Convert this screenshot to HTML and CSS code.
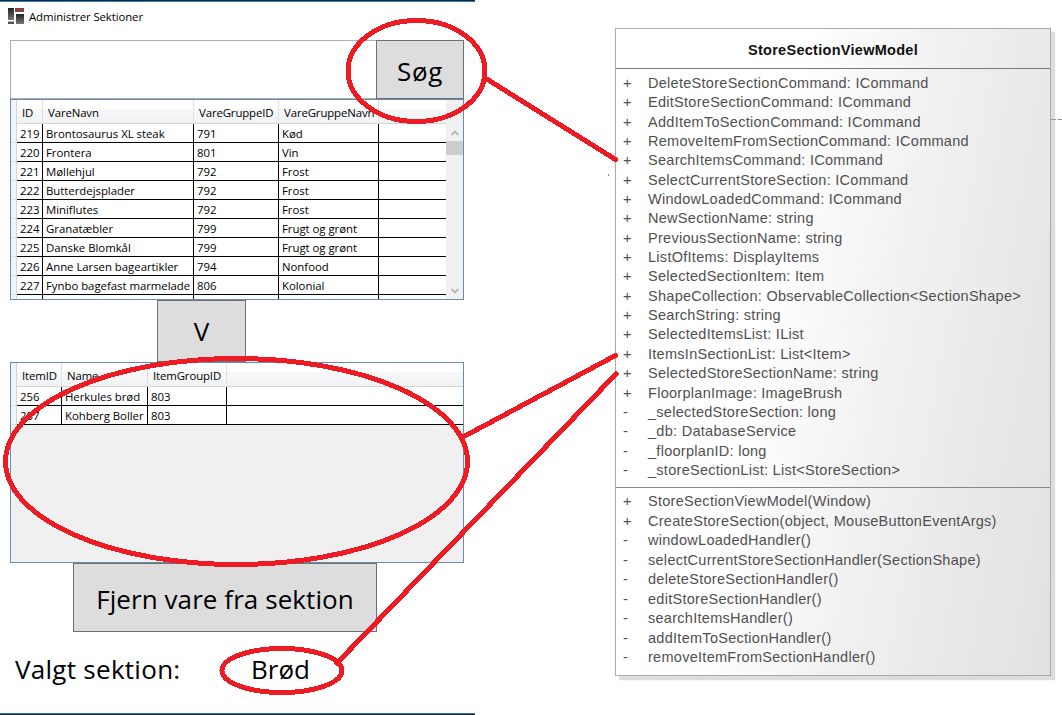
FILE: index.html
```
<!DOCTYPE html>
<html lang="da">
<head>
<meta charset="utf-8">
<title>Administrer Sektioner</title>
<link rel="stylesheet" href="styles.css">
</head>
<body>
<main class="page">
  <section class="window">
    <header class="titlebar">
      <svg class="logo" width="16" height="16" viewBox="0 0 16 16">
        <defs><linearGradient id="g" x1="0" y1="0" x2="0" y2="1"><stop offset="0" stop-color="#222"/><stop offset="1" stop-color="#777"/></linearGradient></defs>
        <rect width="6" height="12" fill="url(#g)"/><rect y="13.500" width="6" height="2.500" fill="#555"/>
        <rect x="7" width="9" height="4" fill="#555"/><rect x="9" y="1" width="5" height="2" fill="#f02018"/>
        <rect x="8" y="6" width="8" height="10" fill="url(#g)"/>
      </svg>
      <span>Administrer Sektioner</span>
    </header>
    <div class="search"><div class="input"></div><button class="btn find">Søg</button></div>
    <div class="grid">
      <div class="main">
        <div class="row head items"><i></i><b>ID</b><b>VareNavn</b><b>VareGruppeID</b><b>VareGruppeNavn</b><b></b></div>
        <div class="row items"><i></i><span>219</span><span>Brontosaurus XL steak</span><span>791</span><span>Kød</span><span></span></div>
        <div class="row items"><i></i><span>220</span><span>Frontera</span><span>801</span><span>Vin</span><span></span></div>
        <div class="row items"><i></i><span>221</span><span>Møllehjul</span><span>792</span><span>Frost</span><span></span></div>
        <div class="row items"><i></i><span>222</span><span>Butterdejsplader</span><span>792</span><span>Frost</span><span></span></div>
        <div class="row items"><i></i><span>223</span><span>Miniflutes</span><span>792</span><span>Frost</span><span></span></div>
        <div class="row items"><i></i><span>224</span><span>Granatæbler</span><span>799</span><span>Frugt og grønt</span><span></span></div>
        <div class="row items"><i></i><span>225</span><span>Danske Blomkål</span><span>799</span><span>Frugt og grønt</span><span></span></div>
        <div class="row items"><i></i><span>226</span><span>Anne Larsen bageartikler</span><span>794</span><span>Nonfood</span><span></span></div>
        <div class="row items"><i></i><span>227</span><span>Fynbo bagefast marmelade</span><span>806</span><span>Kolonial</span><span></span></div>
        <div class="row items"><i></i><span></span><span></span><span></span><span></span><span></span></div>
      </div>
      <div class="scroll">
        <svg width="8" height="6" viewBox="0 0 8 6"><path d="M.5 5 4 1.500 7.500 5" fill="none" stroke="#a3a3a3" stroke-width="1.400"/></svg>
        <div class="thumb"></div>
        <svg class="down" width="8" height="6" viewBox="0 0 8 6"><path d="M.5 1 4 4.500 7.500 1" fill="none" stroke="#a3a3a3" stroke-width="1.400"/></svg>
      </div>
    </div>
    <button class="btn move">V</button>
    <div class="grid">
      <div class="main">
        <div class="row head section"><i></i><b>ItemID</b><b>Name</b><b>ItemGroupID</b><b></b></div>
        <div class="row section"><i></i><span>256</span><span>Herkules brød</span><span>803</span><span></span></div>
        <div class="row section"><i></i><span>257</span><span>Kohberg Boller</span><span>803</span><span></span></div>
      </div>
    </div>
    <button class="btn remove">Fjern vare fra sektion</button>
    <div class="status"><span class="label">Valgt sektion:</span><span class="value">Brød</span></div>
    <div class="edge"></div>
  </section>
  <section class="uml">
    <h1>StoreSectionViewModel</h1>
    <ul class="attrs">
      <li><em>+</em><span>DeleteStoreSectionCommand: ICommand</span></li>
      <li><em>+</em><span>EditStoreSectionCommand: ICommand</span></li>
      <li><em>+</em><span>AddItemToSectionCommand: ICommand</span></li>
      <li><em>+</em><span>RemoveItemFromSectionCommand: ICommand</span></li>
      <li><em>+</em><span>SearchItemsCommand: ICommand</span></li>
      <li><em>+</em><span>SelectCurrentStoreSection: ICommand</span></li>
      <li><em>+</em><span>WindowLoadedCommand: ICommand</span></li>
      <li><em>+</em><span>NewSectionName: string</span></li>
      <li><em>+</em><span>PreviousSectionName: string</span></li>
      <li><em>+</em><span>ListOfItems: DisplayItems</span></li>
      <li><em>+</em><span>SelectedSectionItem: Item</span></li>
      <li><em>+</em><span>ShapeCollection: ObservableCollection&lt;SectionShape&gt;</span></li>
      <li><em>+</em><span>SearchString: string</span></li>
      <li><em>+</em><span>SelectedItemsList: IList</span></li>
      <li><em>+</em><span>ItemsInSectionList: List&lt;Item&gt;</span></li>
      <li><em>+</em><span>SelectedStoreSectionName: string</span></li>
      <li><em>+</em><span>FloorplanImage: ImageBrush</span></li>
      <li><em>-</em><span>_selectedStoreSection: long</span></li>
      <li><em>-</em><span>_db: DatabaseService</span></li>
      <li><em>-</em><span>_floorplanID: long</span></li>
      <li><em>-</em><span>_storeSectionList: List&lt;StoreSection&gt;</span></li>
    </ul>
    <ul class="ops">
      <li><em>+</em><span>StoreSectionViewModel(Window)</span></li>
      <li><em>+</em><span>CreateStoreSection(object, MouseButtonEventArgs)</span></li>
      <li><em>-</em><span>windowLoadedHandler()</span></li>
      <li><em>-</em><span>selectCurrentStoreSectionHandler(SectionShape)</span></li>
      <li><em>-</em><span>deleteStoreSectionHandler()</span></li>
      <li><em>-</em><span>editStoreSectionHandler()</span></li>
      <li><em>-</em><span>searchItemsHandler()</span></li>
      <li><em>-</em><span>addItemToSectionHandler()</span></li>
      <li><em>-</em><span>removeItemFromSectionHandler()</span></li>
    </ul>
  </section>
  <svg class="marks" width="1062" height="715" viewBox="0 0 1062 715">
    <g fill="none" stroke="#ed1c24" stroke-width="5" stroke-linecap="round" shape-rendering="crispEdges">
      <ellipse cx="416.500" cy="71" rx="68.500" ry="50.500"/>
      <path d="M485 78 615.500 159.500"/>
      <ellipse cx="236.500" cy="461.500" rx="231" ry="103"/>
      <path d="M463 437 615.500 355.500"/>
      <ellipse cx="282" cy="670.500" rx="60" ry="22"/>
      <path d="M337 663 616 374"/>
    </g>
    <path d="M1051 119.500H1062" stroke="#999" stroke-dasharray="5 1.500"/>
    <rect x="608" y="174" width="1" height="2" fill="#888"/>
  </svg>
</main>
</body>
</html>
```
FILE: styles.css
```
* { box-sizing: border-box; }
body { margin: 0; background: #fff; }
.page { position: relative; display: flex; width: 1062px; height: 715px; overflow: hidden; }
.window {
  display: flex; flex-direction: column; width: 475px; height: 715px;
  border-top: 1px solid #20242c;
  font-family: "Open Sans", "Noto Sans", sans-serif; font-size: 11.4px; color: #000;
}
.titlebar { display: flex; gap: 5px; height: 39px; padding: 6px 8px 0; border-top: 1px solid #2878bd; line-height: 17px; letter-spacing: -.1px; }
.search { display: flex; height: 59px; margin-left: 10px; width: 454px; flex: none; }
.input { flex: 1; border: 1px solid #abadb3; border-right: 0; }
.btn { font: 26px "Open Sans", "Noto Sans", sans-serif; background: #ddd; border: 1px solid #707070; border-radius: 0; padding: 0; color: #000; flex: none; }
.find { width: 88px; padding-top: 2px; letter-spacing: .6px; }
.grid { display: flex; flex: none; width: 454px; height: 201px; margin-left: 10px; border: 1px solid #688caf; background: #f0f0f0; overflow: hidden; }
.main { flex: 1; }
.row { display: grid; height: 19px; background: #fff; line-height: 19px; white-space: nowrap; letter-spacing: -.03px; }
.items { grid-template-columns: 6px 26px 151px 85px 100px 1fr; }
.section { grid-template-columns: 6px 45px 86px 79px 1fr; }
.row i { background: #f3f4f6; border-right: 1px solid #d5d5d5; border-bottom: 1px solid #e3e3e3; }
.row span { padding-left: 3px; border-right: 1px solid #000; border-bottom: 1px solid #000; overflow: hidden; }
.row span:last-child, .row b:last-child { border-right: 0; }
.head { height: 24px; line-height: 26px; background: linear-gradient(#fff 0 40%, #f7f8fa 40%, #f1f2f4); border-bottom: 1px solid #d5d5d5; letter-spacing: -.12px; }
.head i { border-bottom: 0; }
.head b { font-weight: 400; padding-left: 5px; border-right: 1px solid #dedfe1; }
.scroll { display: flex; flex-direction: column; align-items: center; width: 17px; padding: 30px 0 5px; }
.thumb { width: 17px; height: 14px; margin-top: 5px; background: #cdcdcd; }
.down { margin-top: auto; }
.move { width: 89px; height: 62px; margin-left: 157px; }
.remove { width: 304px; height: 69px; margin-left: 73px; padding-top: 2px; letter-spacing: .07px; }
.status { display: flex; padding-left: 15px; height: 81px; font-size: 26px; line-height: 75px; white-space: nowrap; }
.label { width: 236px; letter-spacing: .28px; }
.edge { height: 2px; background: #20242c; border-top: 1px solid #2878bd; margin-top: auto; flex: none; }
.uml {
  width: 436px; height: 648px; margin: 28px 0 0 140px; flex: none;
  border: 1px solid #aaa; background: linear-gradient(100deg, #fff 35%, #f1f1f1 60%, #e1e1e1);
  box-shadow: 4px 4px 1px #ddd;
  font-family: "Liberation Sans", Arial, sans-serif; font-size: 14.5px; letter-spacing: .28px; color: #505050;
}
h1 { margin: 0; height: 40px; font-size: 14.5px; line-height: 42px; text-align: center; color: #111; border-bottom: 1px solid #777; }
ul { list-style: none; margin: 0; padding: 5px 0 0 7px; }
li { display: flex; height: 19.35px; line-height: 19.35px; white-space: nowrap; }
em { font-style: normal; width: 25px; }
.attrs { height: 419px; border-bottom: 1px solid #888; }
.ops { padding-top: 4px; }
.ops li { height: 19.5px; }
.marks { position: absolute; left: 0; top: 0; }
```
